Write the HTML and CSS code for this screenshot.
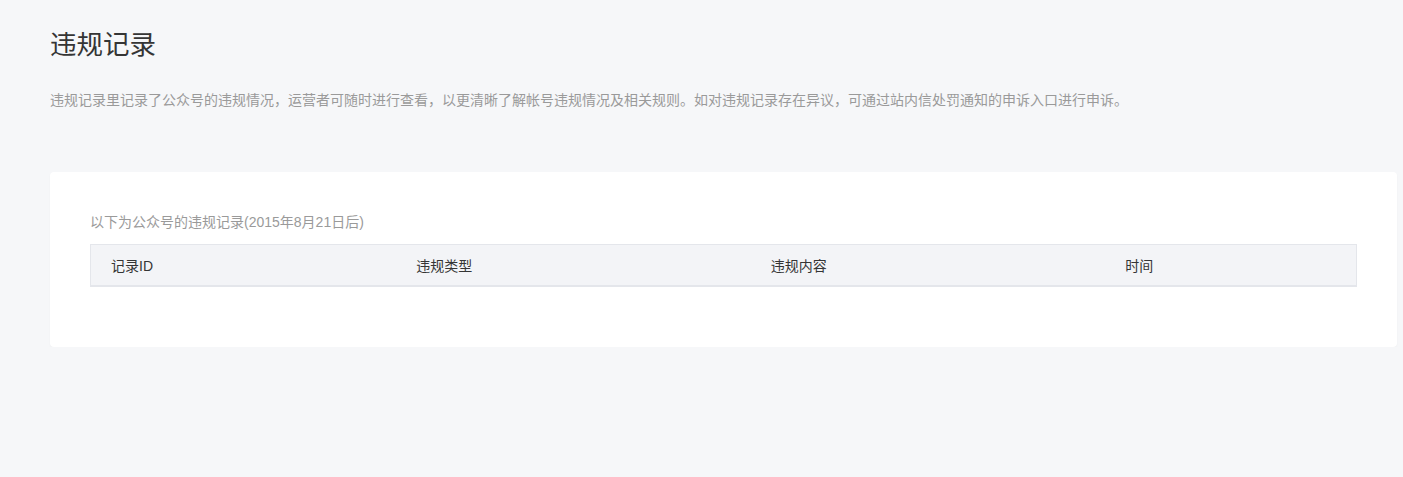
FILE: index.html
```html
<!DOCTYPE html>
<html lang="zh-CN">
<head>
  <meta charset="UTF-8" />
  <title>违规记录</title>
  <link rel="stylesheet" href="styles.css">
</head>
<body>
  <div class="page">
    <h2 class="page-title">违规记录</h2>
    <p class="page-desc">违规记录里记录了公众号的违规情况，运营者可随时进行查看，以更清晰了解帐号违规情况及相关规则。如对违规记录存在异议，可通过站内信处罚通知的申诉入口进行申诉。</p>

    <div class="card">
      <div class="card-tips">以下为公众号的违规记录(2015年8月21日后)</div>
      <table class="record-table">
        <thead>
          <tr>
            <th class="col-id">记录ID</th>
            <th class="col-type">违规类型</th>
            <th class="col-content">违规内容</th>
            <th class="col-time">时间</th>
          </tr>
        </thead>
      </table>
    </div>
  </div>
</body>
</html>
```

FILE: styles.css
```css
* { margin: 0; padding: 0; box-sizing: border-box; }

body {
  background: #f6f7f9;
  font-family: "Liberation Sans", "Noto Sans CJK SC", sans-serif;
  color: #353535;
}

.page {
  padding: 30px 6px 0 50px;
}

.page-title {
  font-size: 26.5px;
  font-weight: 400;
  line-height: 30px;
  color: #353535;
}

.page-desc {
  margin-top: 30px;
  font-size: 14px;
  line-height: 20px;
  color: #9a9a9a;
}

.card {
  margin-top: 62px;
  background: #fff;
  border-radius: 4px;
  box-shadow: 0 1px 2px rgba(0, 0, 0, 0.04);
  padding: 40px 40px 60px;
}

.card-tips {
  font-size: 14px;
  line-height: 20px;
  color: #9a9a9a;
}

.record-table {
  margin-top: 12px;
  width: 100%;
  border-collapse: collapse;
  table-layout: fixed;
}

.record-table th {
  background: #f3f4f7;
  border-top: 1px solid #e4e6eb;
  border-bottom: 2px solid #e4e6eb;
  height: 41px;
  padding: 0 0 0 22px;
  text-align: left;
  font-size: 14px;
  font-weight: 400;
  color: #353535;
}

.record-table .col-id { width: 24%; padding-left: 20px; border-left: 1px solid #e4e6eb; }
.record-table .col-type { width: 28%; }
.record-table .col-content { width: 28%; }
.record-table .col-time { width: 20%; border-right: 1px solid #e4e6eb; }
```
